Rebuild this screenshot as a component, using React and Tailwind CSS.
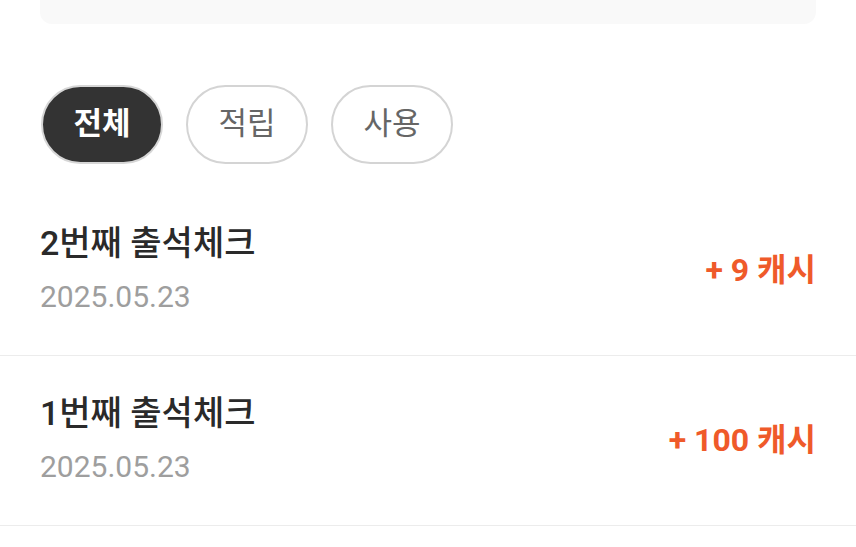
import React from "react";

const font = { fontFamily: '"Roboto", "Noto Sans CJK KR", sans-serif' };

function Pill({ label, active }) {
  return (
    <div
      className={
        "w-[122px] h-[79px] rounded-full border-2 flex items-center justify-center text-[31px] " +
        (active
          ? "bg-[#333333] border-[#d6d6d6] text-white font-bold"
          : "bg-white border-[#d4d4d4] text-[#666666] font-normal")
      }
    >
      {label}
    </div>
  );
}

function Row({ title, date, amount }) {
  return (
    <div className="flex items-center justify-between px-[40px] pt-[39px] pb-[41px] border-b border-[#ececec]">
      <div className="flex flex-col gap-[19px]">
        <div className="text-[34px] leading-[36px] font-medium text-[#2a2a2a]">{title}</div>
        <div className="text-[30px] leading-[34px] text-[#9e9e9e]">{date}</div>
      </div>
      <div className="text-[32px] leading-[34px] font-bold text-[#ef5a2a]">{amount}</div>
    </div>
  );
}

export default function App() {
  return (
    <div className="w-[856px] h-[547px] bg-white overflow-hidden" style={font}>
      <div className="mx-[40px] h-[24px] bg-[#f9f9f9] rounded-b-[12px]" />
      <div className="flex gap-[23px] px-[41px] mt-[61px]">
        <Pill label="전체" active />
        <Pill label="적립" />
        <Pill label="사용" />
      </div>
      <div className="mt-[22px]">
        <Row title="2번째 출석체크" date="2025.05.23" amount="+ 9 캐시" />
        <Row title="1번째 출석체크" date="2025.05.23" amount="+ 100 캐시" />
      </div>
    </div>
  );
}
